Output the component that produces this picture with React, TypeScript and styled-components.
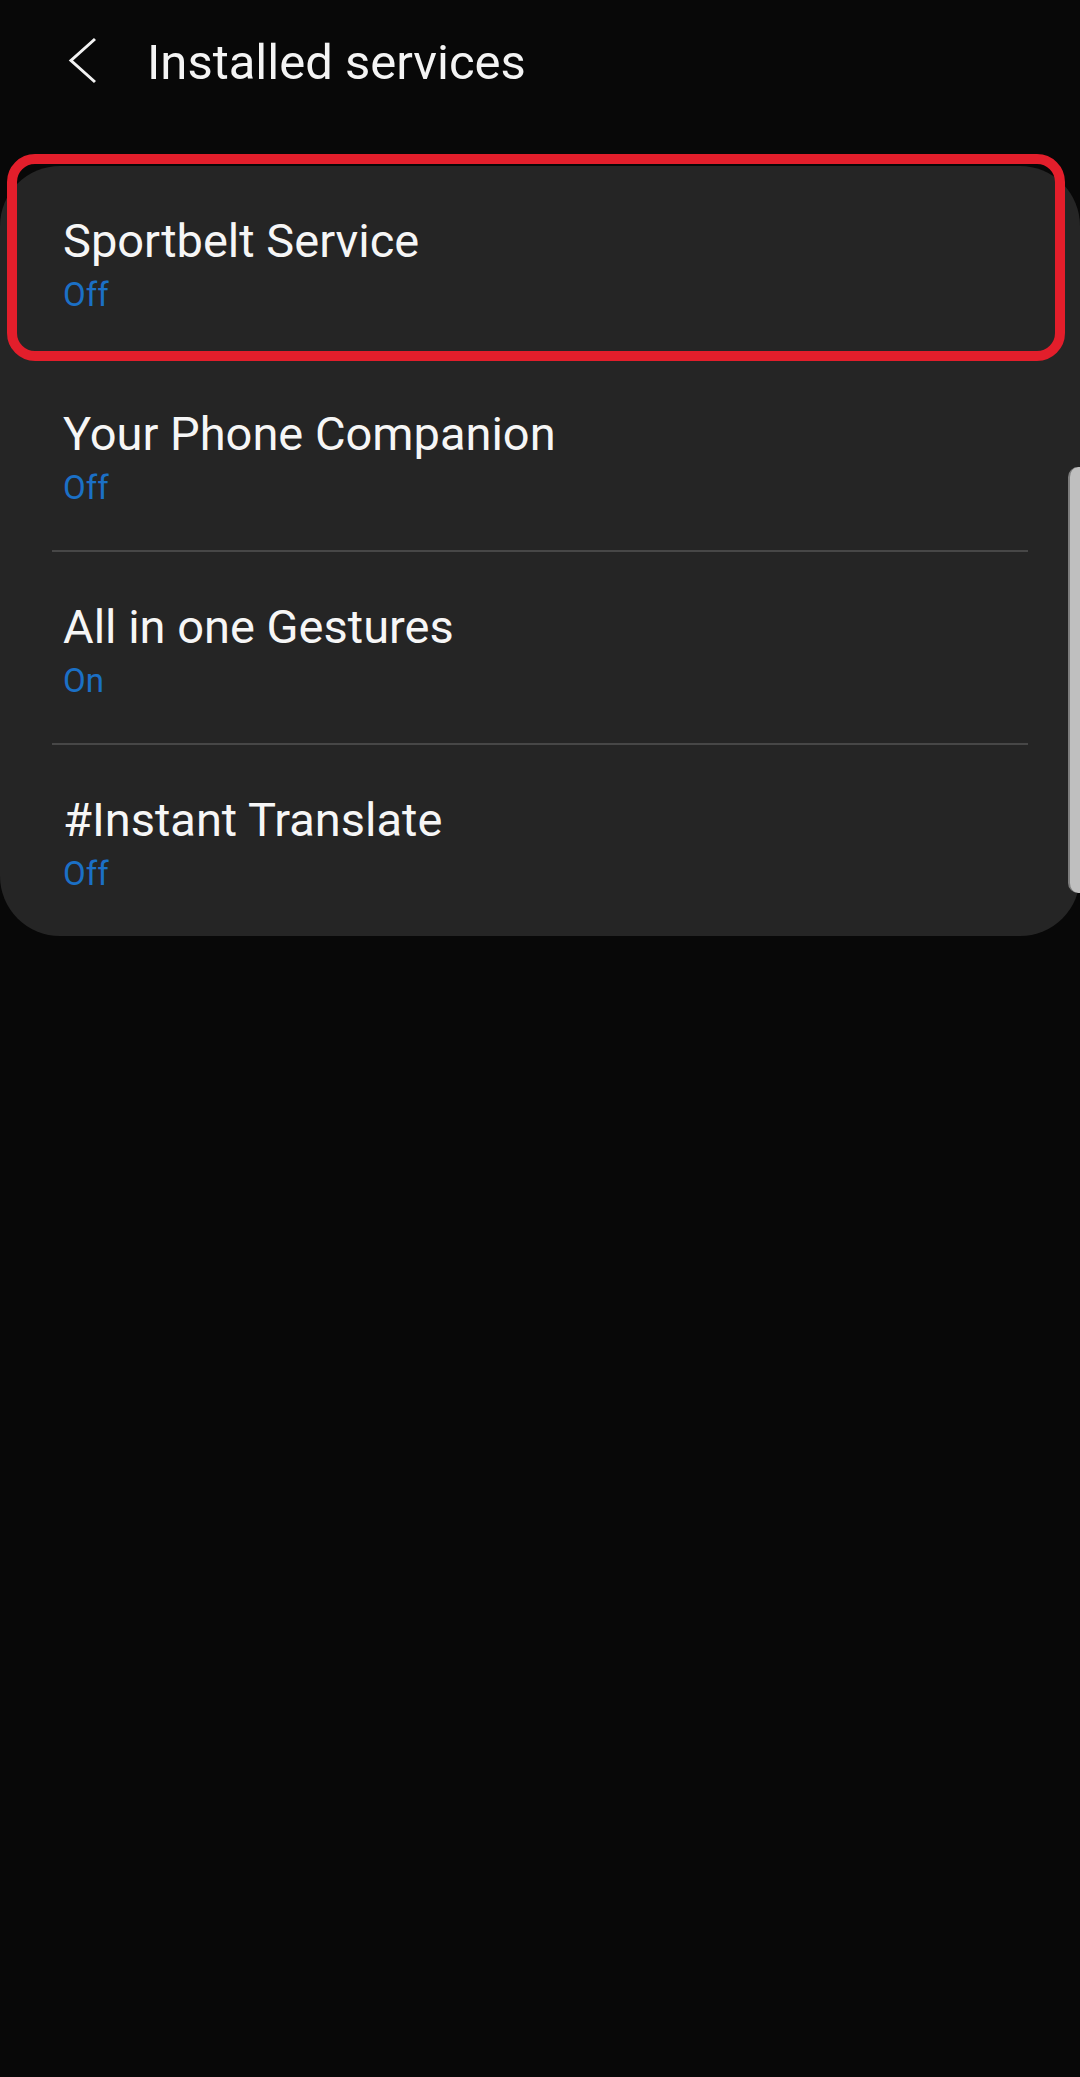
import React from "react";
import styled, { createGlobalStyle } from "styled-components";

const GlobalStyle = createGlobalStyle`
  html, body {
    margin: 0;
    padding: 0;
    background: #080808;
  }
  body {
    font-family: Roboto, "Noto Sans", "Liberation Sans", sans-serif;
    -webkit-font-smoothing: antialiased;
  }
  * { box-sizing: border-box; }
`;

const Page = styled.div`
  position: relative;
  width: 1080px;
  min-height: 2077px;
  background: #080808;
  overflow: hidden;
`;

const Header = styled.header`
  display: flex;
  align-items: flex-start;
  height: 166px;
  padding: 34px 0 0 68px;
`;

const BackButton = styled.button`
  display: flex;
  width: 30px;
  height: 48px;
  margin-top: 2px;
  padding: 0;
  border: none;
  background: transparent;
  color: #f2f2f2;
  cursor: pointer;
`;

const Title = styled.h1`
  margin: 0 0 0 49px;
  font-size: 49px;
  line-height: 58px;
  font-weight: 400;
  color: #f4f4f4;
`;

const Card = styled.section`
  display: flex;
  flex-direction: column;
  width: 1080px;
  background: #252525;
  border-radius: 60px;
`;

const Row = styled.div`
  position: relative;
  display: flex;
  flex-direction: column;
  gap: 6px;
  height: 191px;
  padding: 47px 62px 0 63px;
`;

const RowTitle = styled.div`
  font-size: 47px;
  line-height: 56px;
  color: #f6f6f6;
  white-space: nowrap;
`;

const RowStatus = styled.div`
  font-size: 33px;
  line-height: 40px;
  color: #1b70c6;
`;

const Divider = styled.div`
  height: 2px;
  margin: 0 52px;
  background: #474747;
`;

const Highlight = styled.div`
  position: absolute;
  top: -12px;
  left: 7px;
  right: 15px;
  bottom: -4px;
  border: 10px solid #e31e2b;
  border-radius: 28px;
  pointer-events: none;
`;

const ScrollThumb = styled.div`
  position: absolute;
  top: 467px;
  right: 0;
  width: 12px;
  height: 426px;
  background: #bfbfbf;
  border-left: 2px solid #7d7d7d;
  border-radius: 10px 0 0 10px;
`;

type Service = { name: string; on: boolean; highlighted?: boolean };

const services: Service[] = [
  { name: "Sportbelt Service", on: false, highlighted: true },
  { name: "Your Phone Companion", on: false },
  { name: "All in one Gestures", on: true },
  { name: "#Instant Translate", on: false },
];

const Chevron = () => (
  <svg width="30" height="48" viewBox="0 0 30 48" fill="none">
    <polyline
      points="27,3 3,24.5 27,46"
      stroke="currentColor"
      strokeWidth="3"
      strokeLinejoin="miter"
      strokeLinecap="butt"
    />
  </svg>
);

export default function App() {
  return (
    <>
      <GlobalStyle />
      <Page>
        <Header>
          <BackButton aria-label="Back">
            <Chevron />
          </BackButton>
          <Title>Installed services</Title>
        </Header>
        <Card>
          {services.map((s, i) => (
            <React.Fragment key={s.name}>
              {i > 0 && <Divider />}
              <Row>
                <RowTitle>{s.name}</RowTitle>
                <RowStatus>{s.on ? "On" : "Off"}</RowStatus>
                {s.highlighted && <Highlight />}
              </Row>
            </React.Fragment>
          ))}
        </Card>
        <ScrollThumb />
      </Page>
    </>
  );
}
